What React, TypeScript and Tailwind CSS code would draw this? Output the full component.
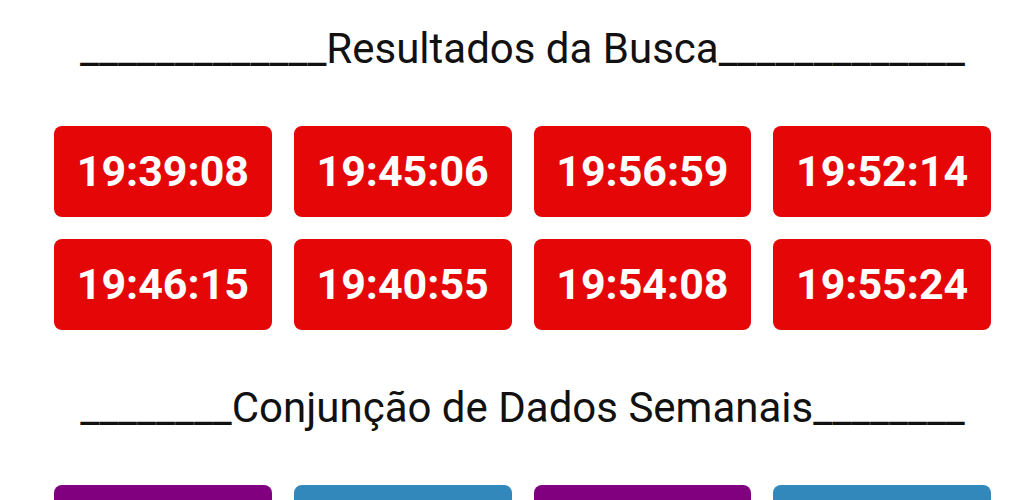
import React from 'react';

const resultados = [
  '19:39:08',
  '19:45:06',
  '19:56:59',
  '19:52:14',
  '19:46:15',
  '19:40:55',
  '19:54:08',
  '19:55:24',
];

const semanais = ['bg-[#800080]', 'bg-[#3287bb]', 'bg-[#800080]', 'bg-[#3287bb]'];

function Titulo({ texto, tracos }: { texto: string; tracos: number }) {
  const linha = '_'.repeat(tracos);
  return (
    <h2 className="text-center text-[42px] leading-[50px] text-[#111] whitespace-nowrap">
      {linha}
      {texto}
      {linha}
    </h2>
  );
}

export default function App() {
  return (
    <div
      className="min-h-[500px] bg-white pl-[54px] pr-[33px] pt-[24px] overflow-hidden"
      style={{ fontFamily: 'Roboto, "Noto Sans", sans-serif' }}
    >
      <Titulo texto="Resultados da Busca" tracos={13} />

      <div className="mt-[52px] grid grid-cols-4 gap-[22px]">
        {resultados.map((hora) => (
          <button
            key={hora}
            className="h-[91px] rounded-[8px] bg-[#e50707] text-white text-[43px] font-bold leading-none flex items-center justify-center"
          >
            {hora}
          </button>
        ))}
      </div>

      <div className="mt-[53px]">
        <Titulo texto="Conjunção de Dados Semanais" tracos={8} />
      </div>

      <div className="mt-[52px] grid grid-cols-4 gap-[22px]">
        {semanais.map((cor, i) => (
          <div key={i} className={`h-[91px] rounded-[8px] ${cor}`} />
        ))}
      </div>
    </div>
  );
}
